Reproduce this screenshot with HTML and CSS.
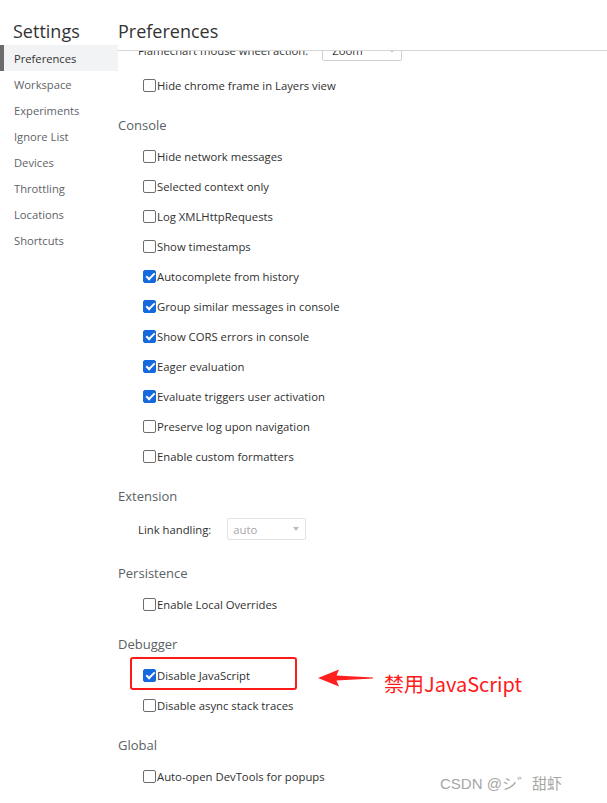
FILE: index.html
```html
<!DOCTYPE html>
<html lang="en">
<head>
<meta charset="utf-8">
<title>Settings</title>
<link rel="stylesheet" href="styles.css">
</head>
<body>
<div class="app">
  <nav class="sidebar">
    <h1 class="sidebar-title">Settings</h1>
    <ul class="tabs">
      <li class="tab selected">Preferences</li>
      <li class="tab">Workspace</li>
      <li class="tab">Experiments</li>
      <li class="tab">Ignore List</li>
      <li class="tab">Devices</li>
      <li class="tab">Throttling</li>
      <li class="tab">Locations</li>
      <li class="tab">Shortcuts</li>
    </ul>
  </nav>
  <main class="main">
    <header class="main-header">Preferences</header>
    <div class="scroller">
      <div class="content">
        <div class="select-row first">
          <span class="select-label">Flamechart mouse wheel action:</span>
          <span class="select"><span class="select-value">Zoom</span><span class="caret"></span></span>
        </div>
        <label class="row"><input type="checkbox"><span>Hide chrome frame in Layers view</span></label>

        <section class="section">
          <h2 class="section-title">Console</h2>
          <label class="row"><input type="checkbox"><span>Hide network messages</span></label>
          <label class="row"><input type="checkbox"><span>Selected context only</span></label>
          <label class="row"><input type="checkbox"><span>Log XMLHttpRequests</span></label>
          <label class="row"><input type="checkbox"><span>Show timestamps</span></label>
          <label class="row"><input type="checkbox" checked><span>Autocomplete from history</span></label>
          <label class="row"><input type="checkbox" checked><span>Group similar messages in console</span></label>
          <label class="row"><input type="checkbox" checked><span>Show CORS errors in console</span></label>
          <label class="row"><input type="checkbox" checked><span>Eager evaluation</span></label>
          <label class="row"><input type="checkbox" checked><span>Evaluate triggers user activation</span></label>
          <label class="row"><input type="checkbox"><span>Preserve log upon navigation</span></label>
          <label class="row"><input type="checkbox"><span>Enable custom formatters</span></label>
        </section>

        <section class="section">
          <h2 class="section-title">Extension</h2>
          <div class="select-row link">
            <span class="select-label">Link handling:</span>
            <span class="select disabled"><span class="select-value">auto</span><span class="caret"></span></span>
          </div>
        </section>

        <section class="section">
          <h2 class="section-title">Persistence</h2>
          <label class="row"><input type="checkbox"><span>Enable Local Overrides</span></label>
        </section>

        <section class="section">
          <h2 class="section-title">Debugger</h2>
          <div class="annotated">
            <label class="row"><input type="checkbox" checked><span>Disable JavaScript</span></label>
            <div class="callout-box"></div>
            <div class="callout">
              <svg class="arrow" width="56" height="18" viewBox="0 0 56 18"><polygon points="0,9 21,0.5 18.5,6.5 55,8.6 55,9.6 18.5,11.5 21,17.5" fill="#ff1f1f"/></svg>
              <span class="callout-text">禁用JavaScript</span>
            </div>
          </div>
          <label class="row"><input type="checkbox"><span>Disable async stack traces</span></label>
        </section>

        <section class="section">
          <h2 class="section-title">Global</h2>
          <label class="row"><input type="checkbox"><span>Auto-open DevTools for popups</span></label>
        </section>
      </div>
    </div>
  </main>
</div>
<div class="watermark">CSDN @シ゛甜虾</div>
</body>
</html>
```
FILE: styles.css
```css
* { box-sizing: border-box; }
html, body { margin: 0; padding: 0; }
body {
  width: 607px;
  height: 803px;
  overflow: hidden;
  background: #fff;
  font-family: "Open Sans", "Noto Sans", "Liberation Sans", sans-serif;
  font-size: 11.3px;
  color: #303030;
  position: relative;
}
.app {
  display: flex;
  height: 803px;
}
.sidebar {
  width: 118px;
  flex: none;
}
.sidebar-title {
  margin: 0;
  font-weight: 400;
  font-size: 18px;
  line-height: 24px;
  padding: 19px 0 2px 13px;
  color: #333;
  height: 45px;
}
.tabs {
  list-style: none;
  margin: 0;
  padding: 0;
}
.tab {
  height: 26px;
  line-height: 25px;
  padding-top: 1px;
  padding-left: 14px;
  font-size: 11.2px;
  color: #5f6368;
  white-space: nowrap;
}
.tab.selected {
  background: #f1f3f4;
  border-left: 4px solid #6b6b6b;
  padding-left: 10px;
  color: #333;
}
.main {
  flex: 1;
  display: flex;
  flex-direction: column;
  min-width: 0;
}
.main-header {
  height: 51px;
  font-size: 18px;
  line-height: 24px;
  padding-top: 19px;
  color: #333;
  border-bottom: 1px solid #d6d6d6;
  flex: none;
  position: relative;
  z-index: 1;
}
.scroller {
  flex: 1;
  overflow: hidden;
}
.content {
  margin-top: -21px;
}
.select-row {
  display: flex;
  align-items: center;
  height: 40px;
  padding-left: 20px;
}
.select-row.first .select-label { margin-right: 14px; color: #333; }
.select-row.link {
  height: 36px;
  padding-bottom: 2px;
}
.select-row.link .select-label { margin-right: 16px; }
.select {
  display: flex;
  align-items: center;
  justify-content: space-between;
  width: 80px;
  height: 22px;
  border: 1px solid #cdd0d4;
  border-radius: 2px;
  padding: 0 6px 0 9px;
  background: #fff;
  color: #333;
}
.select.disabled {
  width: 79px;
  border-color: #e3e3e3;
  color: #a8a8a8;
  padding-left: 5px;
}
.caret {
  width: 0;
  height: 0;
  border-left: 3.5px solid transparent;
  border-right: 3.5px solid transparent;
  border-top: 4px solid #555;
}
.select.disabled .caret { border-top-color: #bcbcbc; }
.row {
  display: flex;
  align-items: center;
  height: 30px;
  padding-left: 25px;
  color: #303030;
}
.row input {
  -webkit-appearance: none;
  appearance: none;
  width: 13px;
  height: 13px;
  margin: 0 1px 0 0;
  border: 1px solid #6e6e6e;
  border-radius: 2px;
  background: #fff;
  flex: none;
  position: relative;
}
.row input:checked {
  background: #1469dd;
  border-color: #1469dd;
}
.row input:checked::after {
  content: "";
  position: absolute;
  left: 3.5px;
  top: 0.5px;
  width: 3px;
  height: 7px;
  border: solid #fff;
  border-width: 0 2px 2px 0;
  transform: rotate(45deg);
}
.section {
  margin-top: 14px;
}
.section-title {
  margin: 0 0 5px;
  font-weight: 400;
  font-size: 13px;
  line-height: 22px;
  color: #5a5f64;
}
.annotated {
  position: relative;
}
.callout-box {
  position: absolute;
  left: 12px;
  top: -3px;
  width: 167px;
  height: 33px;
  border: 2.5px solid #ff1a1a;
  border-radius: 3px;
}
.callout {
  position: absolute;
  left: 200px;
  top: 6px;
  display: flex;
  align-items: flex-start;
  white-space: nowrap;
}
.arrow { flex: none; margin-top: 3px; }
.callout-text {
  margin-left: 10px;
  font-family: "Noto Sans CJK SC", "Noto Sans", sans-serif;
  font-size: 20px;
  line-height: 36px;
  color: #ff1a1a;
}
.watermark {
  position: absolute;
  left: 440px;
  top: 773px;
  font-family: "Liberation Sans", "Noto Sans CJK JP", sans-serif;
  font-size: 15px;
  line-height: 22px;
  color: #a6a6a6;
  white-space: nowrap;
}
```
